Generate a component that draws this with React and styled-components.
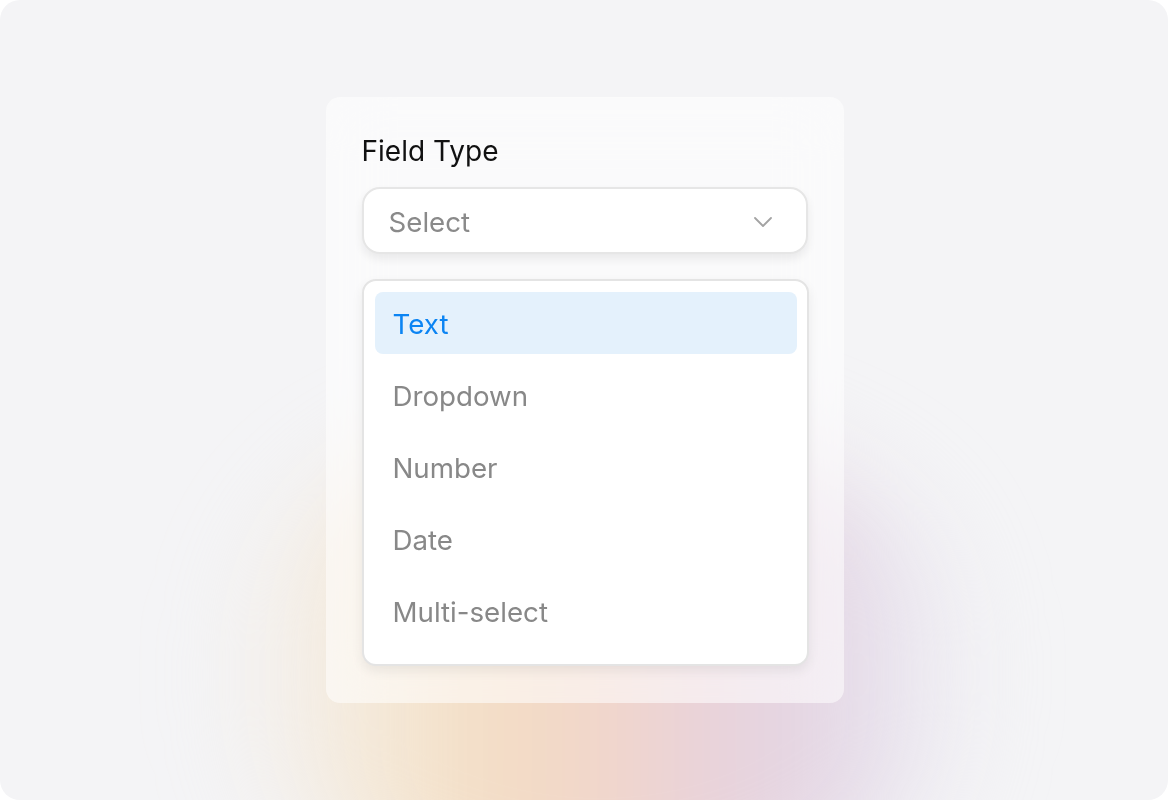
import React from "react";
import styled, { createGlobalStyle } from "styled-components";

const GlobalStyle = createGlobalStyle`
  html, body {
    margin: 0;
    padding: 0;
    background: #ffffff;
  }
  body {
    font-family: Inter, "Noto Sans", "Liberation Sans", sans-serif;
  }
`;

const Frame = styled.div`
  position: relative;
  width: 1168px;
  height: 800px;
  border-radius: 20px;
  background: #f4f4f6;
  overflow: hidden;
  display: flex;
  align-items: center;
  justify-content: center;
  padding-left: 1px;
  box-sizing: border-box;
`;

const Glow = styled.div`
  position: absolute;
  left: 230px;
  right: 200px;
  top: 430px;
  bottom: -120px;
  border-radius: 50%;
  background: linear-gradient(
    90deg,
    rgba(244, 244, 246, 0) 0%,
    #f4e7d4 22%,
    #f3ddc4 35%,
    #f2d6c9 50%,
    #ead2d8 62%,
    #e4d4e2 76%,
    #e6e0ec 88%,
    rgba(244, 244, 246, 0) 100%
  );
  filter: blur(50px);
`;

const Card = styled.div`
  position: relative;
  width: 518px;
  height: 606px;
  box-sizing: border-box;
  padding: 37px 36px;
  border-radius: 14px;
  background: rgba(255, 255, 255, 0.55);
  backdrop-filter: blur(30px);
  display: flex;
  flex-direction: column;
`;

const Label = styled.div`
  font-size: 28px;
  line-height: 34px;
  color: #111111;
  margin-bottom: 19px;
`;

const SelectBox = styled.div`
  height: 67px;
  box-sizing: border-box;
  border: 2px solid #e6e6e6;
  border-radius: 18px;
  background: #ffffff;
  box-shadow: 0 5px 10px rgba(0, 0, 0, 0.07);
  display: flex;
  align-items: center;
  justify-content: space-between;
  padding: 2px 34px 0 25px;
  margin-bottom: 25px;
`;

const Placeholder = styled.span`
  font-size: 27.7px;
  line-height: 34px;
  color: #8a8a8a;
`;

const List = styled.div`
  box-sizing: border-box;
  width: 447px;
  border: 2px solid #e4e4e4;
  border-radius: 14px;
  background: #ffffff;
  box-shadow: 0 5px 12px rgba(0, 0, 0, 0.07);
  padding: 11px 10px 22px 11px;
  display: flex;
  flex-direction: column;
  gap: 10px;
`;

const Option = styled.div`
  height: 62px;
  border-radius: 8px;
  display: flex;
  align-items: center;
  padding: 2px 0 0 18px;
  box-sizing: border-box;
  font-size: 27.7px;
  color: ${(p) => (p.$active ? "#0b84f3" : "#888888")};
  background: ${(p) => (p.$active ? "#e4f1fc" : "transparent")};
`;

const Chevron = () => (
  <svg width="18" height="10" viewBox="0 0 18 10" fill="none">
    <polyline
      points="1,1 9,9 17,1"
      stroke="#a3a3a3"
      strokeWidth="1.8"
      strokeLinecap="round"
      strokeLinejoin="round"
    />
  </svg>
);

const options = ["Text", "Dropdown", "Number", "Date", "Multi-select"];

export default function App() {
  return (
    <>
      <GlobalStyle />
      <Frame>
        <Glow />
        <Card>
          <Label>Field Type</Label>
          <SelectBox>
            <Placeholder>Select</Placeholder>
            <Chevron />
          </SelectBox>
          <List>
            {options.map((o, i) => (
              <Option key={o} $active={i === 0}>
                {o}
              </Option>
            ))}
          </List>
        </Card>
      </Frame>
    </>
  );
}
